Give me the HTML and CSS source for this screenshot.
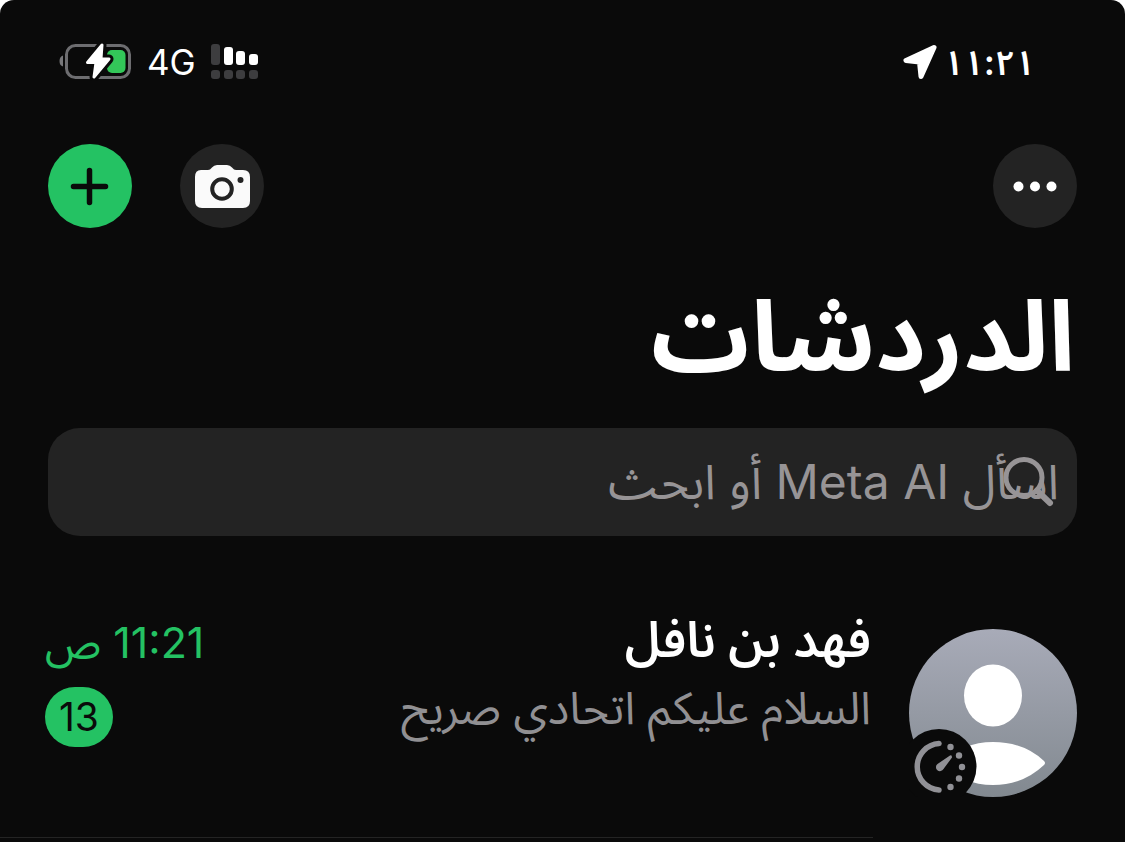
FILE: index.html
```html
<!DOCTYPE html>
<html lang="ar" dir="rtl">
<head>
<meta charset="utf-8">
<meta name="viewport" content="width=device-width, initial-scale=1">
<title>الدردشات</title>
<link rel="stylesheet" href="styles.css">
</head>
<body>
<div class="screen">
  <div class="status">
    <div class="status-group status-time">
      <time class="clock">١١:٢١</time>
      <svg class="location" viewBox="0 0 36 36" aria-hidden="true"><path d="M32 3.500 L4 16.500 L17.500 18 L19 32.500 Z" fill="#fff" stroke="#fff" stroke-width="5" stroke-linejoin="round"/></svg>
    </div>
    <div class="status-group">
      <svg class="signal" viewBox="0 0 48 36" aria-hidden="true">
        <g fill="#3d3d3f"><rect x="0" y="0" width="9" height="21" rx="3"/><rect x="0" y="26" width="9" height="9" rx="3"/><rect x="13" y="26" width="9" height="9" rx="3"/><rect x="25" y="26" width="9" height="9" rx="3"/><rect x="38" y="26" width="9" height="9" rx="3"/></g>
        <g fill="#fff"><rect x="13" y="3" width="9" height="18" rx="3"/><rect x="25" y="7" width="9" height="14" rx="3"/><rect x="38" y="10" width="9" height="11" rx="3"/></g>
      </svg>
      <span class="network">4G</span>
      <svg class="battery" viewBox="0 0 74 38" aria-hidden="true">
        <path d="M5 12.500 Q1.500 13.500 1.500 18 Q1.500 22.500 5 23.500 Z" fill="#77777a"/>
        <rect x="8.500" y="2.500" width="63" height="32" rx="9" fill="none" stroke="#6d6d70" stroke-width="3"/>
        <rect x="49" y="7" width="18.500" height="23" rx="5" fill="#33c759"/>
        <path d="M44 2 L29.500 19.500 H38 L36 34 L51 16 H43 Z" fill="#0a0a0a" stroke="#0a0a0a" stroke-width="9" stroke-linejoin="round"/>
        <path d="M44 2 L29.500 19.500 H38 L36 34 L51 16 H43 Z" fill="#fff" stroke="#fff" stroke-width="3" stroke-linejoin="round"/>
      </svg>
    </div>
  </div>

  <header class="toolbar">
    <button class="round" type="button" aria-label="المزيد"><svg viewBox="0 0 84 84" aria-hidden="true"><g fill="#fff"><circle cx="25.500" cy="42.500" r="5"/><circle cx="42" cy="42.500" r="5"/><circle cx="58.500" cy="42.500" r="5"/></g></svg></button>
    <div class="actions">
      <button class="round" type="button" aria-label="الكاميرا"><svg viewBox="0 0 84 84" aria-hidden="true"><path d="M21 26 H28 Q30 26 32 23.500 Q34 21 37 21 H47 Q50 21 52 23.500 Q54 26 56 26 H63 Q70 26 70 33 V57 Q70 64 63 64 H22 Q15 64 15 57 V33 Q15 26 21 26 Z" fill="#fafafa"/><circle cx="42" cy="45" r="9.800" fill="none" stroke="#232323" stroke-width="4"/><circle cx="60.500" cy="36" r="3" fill="#232323"/></svg></button>
      <button class="round round-green" type="button" aria-label="محادثة جديدة"><svg viewBox="0 0 84 84" aria-hidden="true"><path d="M41.500 26.500 V58.500 M25.500 42.500 H57.500" stroke="#0a0a0a" stroke-width="5.500" stroke-linecap="round"/></svg></button>
    </div>
  </header>

  <h1 class="title">الدردشات</h1>

  <div class="search">
    <input class="search-input" type="search" aria-label="بحث" placeholder="اسأل Meta AI أو ابحث">
    <svg class="search-icon" viewBox="0 0 52 52" aria-hidden="true"><circle cx="21" cy="21.500" r="18"/><path d="M34 34.500 L47 47" stroke-width="6"/></svg>
  </div>

  <main class="chats">
    <a class="chat" href="#chat">
      <span class="avatar">
        <svg viewBox="0 0 168 168" aria-hidden="true">
          <defs><linearGradient id="shade" x1="0" y1="0" x2="0" y2="1"><stop offset="0" stop-color="#a8abb8"/><stop offset="1" stop-color="#828990"/></linearGradient></defs>
          <circle cx="84" cy="84" r="84" fill="url(#shade)"/>
          <ellipse cx="84" cy="66.500" rx="29" ry="31" fill="#fff"/>
          <path d="M32 134 Q54 113 84 113 Q115 113 135 132 Q137 134 135 136 Q114 156 84 156 Q54 156 32 134 Z" fill="#fff"/>
          <circle cx="30" cy="137.500" r="37.500" fill="#0a0a0a"/>
          <path d="M30 114.500 A23.300 23.300 0 0 0 30 161" fill="none" stroke="#919196" stroke-width="5.500" stroke-linecap="round"/>
          <g fill="#919196"><circle cx="41.500" cy="118" r="3.200"/><circle cx="50" cy="126.500" r="3.200"/><circle cx="53" cy="138" r="3.200"/><circle cx="50" cy="149.500" r="3.200"/><circle cx="41.500" cy="158" r="3.200"/><path d="M41 126.500 Q43 125.500 43 128.500 L34.500 140 A4 4 0 1 1 28.500 135 Z"/></g>
        </svg>
      </span>
      <span class="body">
        <span class="texts"><span class="name">فهد بن نافل</span><span class="message">السلام عليكم اتحادي صريح</span></span>
        <span class="meta"><time class="when">11:21 ص</time><span class="badge">13</span></span>
      </span>
    </a>
  </main>
</div>
</body>
</html>
```
FILE: styles.css
```css
* { box-sizing: border-box; }
html { background: #fff; }
body {
  margin: 0;
  color: #fff;
  font-family: Inter, "Noto Sans Arabic", "DejaVu Sans", sans-serif;
}
.screen {
  display: flow-root;
  min-height: 100vh;
  background: #0a0a0a;
  border-radius: 14px 14px 0 0;
  overflow: hidden;
}
.status {
  display: flex;
  justify-content: space-between;
  align-items: center;
  height: 80px;
  margin-top: 22px;
  padding: 0 90px 0 58px;
}
.status-group { display: flex; align-items: center; gap: 15px; }
.status-time { gap: 6px; }
.clock { font-size: 35px; line-height: 48px; font-weight: 600; }
.location { width: 36px; height: 36px; }
.network { font-size: 35px; line-height: 48px; }
.signal { width: 48px; height: 36px; }
.battery { width: 74px; height: 38px; }
.toolbar {
  display: flex;
  justify-content: space-between;
  padding: 42px 48px 0;
}
.actions { display: flex; gap: 48px; }
.round {
  width: 84px;
  height: 84px;
  padding: 0;
  border: 0;
  border-radius: 50%;
  background: #232323;
}
.round svg { display: block; width: 100%; height: 100%; }
.round-green { background: #24c263; }
.title {
  margin: 28px 50px 12px;
  font-size: 98px;
  line-height: 160px;
  font-weight: 700;
}
.search { position: relative; margin: 0 48px; }
.search-input {
  display: block;
  width: 100%;
  height: 108px;
  padding: 0 18px 2px;
  border: 0;
  border-radius: 32px;
  background: #232323;
  color: #fff;
  font-family: inherit;
  font-size: 48px;
}
.search-input::placeholder { color: #979496; opacity: 1; }
.search-icon {
  position: absolute;
  top: 28px;
  right: 22px;
  width: 52px;
  height: 52px;
  fill: none;
  stroke: #979496;
  stroke-width: 5;
  stroke-linecap: round;
}
.chats { padding-top: 70px; }
.chat {
  display: flex;
  gap: 36px;
  padding: 0 48px 0 0;
  color: inherit;
  text-decoration: none;
}
.avatar { flex: none; width: 168px; padding-top: 23px; }
.avatar svg { display: block; width: 168px; height: 168px; }
.body {
  display: flex;
  justify-content: space-between;
  flex: 1;
  min-width: 0;
  height: 232px;
  padding: 0 2px 0 45px;
  border-bottom: 1px solid #242424;
}
.texts, .meta { display: flex; flex-direction: column; }
.name { font-size: 49px; line-height: 68px; font-weight: 600; }
.message { color: #919093; font-size: 45px; line-height: 68px; }
.meta { align-items: flex-end; gap: 9px; }
.when { color: #24c263; font-size: 43px; line-height: 72px; }
.badge {
  padding: 0 14px;
  border-radius: 30px;
  background: #24c263;
  color: #0a0a0a;
  font-size: 39px;
  line-height: 60px;
}
```
